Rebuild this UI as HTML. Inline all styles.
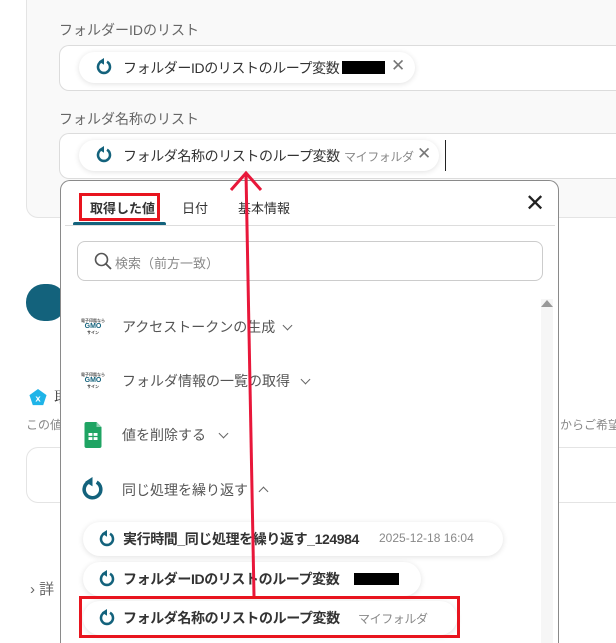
<!DOCTYPE html>
<html><head><meta charset="utf-8"><style>
*{box-sizing:border-box;margin:0;padding:0}
html,body{width:616px;height:643px;overflow:hidden}
body{background:#fff;font-family:"Liberation Sans","Noto Sans CJK JP",sans-serif;position:relative;color:#333}
.abs{position:absolute}
.card{left:26px;top:-20px;width:590px;height:238px;background:#f9f9f9;border:1px solid #e4e4e4;border-right:none;border-radius:12px 0 0 12px}
.lbl{font-size:14px;color:#666}
.inp{left:59px;width:557px;height:46px;background:#fff;border:1px solid #dcdcdc;border-right:none;border-radius:10px 0 0 10px}
.chip{height:31px;background:#fff;border-radius:16px;box-shadow:0 1px 6px rgba(0,0,0,.12);font-size:14px;color:#333;white-space:nowrap;letter-spacing:-0.4px}
.chip > *{position:absolute}
.sub{color:#888;font-size:12px}
.x{color:#777;font-size:17px}
.dd{left:60px;top:180px;width:499px;height:463px;background:#fff;border:1px solid #8a8a8a;border-bottom:none;border-radius:10px 10px 0 0;overflow:hidden}
.item{font-size:14px;color:#555}
.chev{display:inline-block;width:7px;height:7px;border-right:1.6px solid #666;border-bottom:1.6px solid #666;transform:rotate(45deg)}
.chipb{font-weight:bold;font-size:14px;color:#333}
</style></head><body>
<div class="abs card"></div>
<div class="abs lbl" style="left:59px;top:20px">フォルダーIDのリスト</div>
<div class="abs inp" style="top:45px"></div>
<div class="abs chip" style="left:79px;top:52px;width:336px">
<svg style="left:16px;top:6px" width="18" height="18" viewBox="0 0 24 24"><path d="M9 4.5A8 8 0 1 0 16 5" fill="none" stroke="#13627c" stroke-width="3.4"/><path d="M5 4.5 12 0v9z" fill="#13627c"/></svg><span style="left:44px;top:6px">フォルダーIDのリストのループ変数</span><span style="left:263px;top:9px;width:43px;height:13px;background:#000"></span><span class="x" style="left:312px;top:4px">✕</span></div>
<div class="abs lbl" style="left:59px;top:109px">フォルダ名称のリスト</div>
<div class="abs inp" style="top:133px"></div>
<div class="abs chip" style="left:79px;top:140px;width:360px">
<svg style="left:16px;top:6px" width="18" height="18" viewBox="0 0 24 24"><path d="M9 4.5A8 8 0 1 0 16 5" fill="none" stroke="#13627c" stroke-width="3.4"/><path d="M5 4.5 12 0v9z" fill="#13627c"/></svg><span style="left:44px;top:6px">フォルダ名称のリストのループ変数</span><span class="sub" style="left:265px;top:8px">マイフォルダ</span><span class="x" style="left:338px;top:4px">✕</span></div>
<div class="abs" style="left:445px;top:140px;width:1px;height:31px;background:#222"></div>

<div class="abs" style="left:26px;top:284px;width:40px;height:37px;background:#13627c;border-radius:18px"></div>
<svg class="abs" style="left:28px;top:388px" width="20" height="19" viewBox="0 0 20 20"><path d="M10 1 19 7.5 15.5 18h-11L1 7.5z" fill="#1fb4e8"/><text x="10" y="14" font-size="10" fill="#fff" text-anchor="middle" font-weight="bold" font-family="Liberation Sans">x</text></svg>
<div class="abs" style="left:54px;top:386px;font-size:15px;font-family:'Liberation Serif','Noto Serif CJK SC',serif">取</div>
<div class="abs" style="left:26px;top:416px;font-size:12px;color:#888">この値</div>
<div class="abs" style="left:560px;top:416px;font-size:12px;color:#888;white-space:nowrap">からご希望の</div>
<div class="abs" style="left:26px;top:447px;width:590px;height:56px;border:1px solid #e4e4e4;border-right:none;border-radius:12px 0 0 12px"></div>
<div class="abs" style="left:30px;top:578px;font-size:15px;color:#666">›&nbsp;詳</div>

<div class="abs dd">
<div class="abs" style="left:29px;top:17px;font-size:13px;font-weight:bold;color:#333">取得した値</div>
<div class="abs" style="left:18px;top:12px;width:81px;height:28px;border:3px solid #e8141e"></div>
<div class="abs" style="left:12px;top:41px;width:93px;height:4px;background:#13627c;border-radius:2px"></div>
<div class="abs" style="left:4px;top:44px;width:490px;height:1px;background:#ddd"></div>
<div class="abs" style="left:121px;top:17px;font-size:13px;color:#333">日付</div>
<div class="abs" style="left:177px;top:17px;font-size:13px;color:#333">基本情報</div>
<div class="abs" style="left:464px;top:8px;font-size:24px;color:#222">✕</div>
<div class="abs" style="left:16px;top:60px;width:466px;height:40px;border:1px solid #ccc;border-radius:8px"></div>
<svg class="abs" style="left:33px;top:71px" width="18" height="18" viewBox="0 0 18 18"><circle cx="7.5" cy="7.5" r="6" fill="none" stroke="#555" stroke-width="1.6"/><path d="M12 12 17 17" stroke="#555" stroke-width="1.8"/></svg>
<div class="abs" style="left:54px;top:72px;font-size:13px;color:#888">検索（前方一致）</div>
<div class="abs" style="left:480px;top:118px;width:12px;height:400px;background:#f6f6f6"></div>
<div class="abs" style="left:480px;top:119px;width:0;height:0;border-left:6px solid transparent;border-right:6px solid transparent;border-bottom:7px solid #999"></div>

<div class="abs" style="left:19px;top:137px;width:26px;font-size:7px;line-height:6px;color:#13627c;text-align:center;font-weight:bold"><div style="font-size:4px;color:#555">電子印鑑なら</div>GMO<div style="font-size:4px;color:#333">サイン</div></div>
<div class="abs item" style="left:61px;top:136px">アクセストークンの生成</div><span class="abs chev" style="left:223px;top:141px"></span>
<div class="abs" style="left:19px;top:191px;width:26px;font-size:7px;line-height:6px;color:#13627c;text-align:center;font-weight:bold"><div style="font-size:4px;color:#555">電子印鑑なら</div>GMO<div style="font-size:4px;color:#333">サイン</div></div>
<div class="abs item" style="left:61px;top:190px">フォルダ情報の一覧の取得</div><span class="abs chev" style="left:241px;top:195px"></span>
<svg class="abs" style="left:23px;top:241px" width="18" height="26" viewBox="0 0 17 26"><path d="M2 0h10l5 5v19a2 2 0 0 1-2 2H2a2 2 0 0 1-2-2V2a2 2 0 0 1 2-2z" fill="#1fa463"/><path d="M12 0v5h5z" fill="#8ed1b1"/><rect x="4" y="11" width="9" height="7" fill="#fff"/><path d="M4 14.5h9M8.5 11v7" stroke="#1fa463" stroke-width="1.2"/></svg>
<div class="abs item" style="left:61px;top:244px">値を削除する</div><span class="abs chev" style="left:159px;top:249px"></span>
<svg class="abs" style="left:19px;top:296px" width="25" height="25" viewBox="0 0 24 24"><path d="M9 4.5A8 8 0 1 0 16 5" fill="none" stroke="#13627c" stroke-width="3.4"/><path d="M5 4.5 12 0v9z" fill="#13627c"/></svg>
<div class="abs item" style="left:61px;top:299px">同じ処理を繰り返す</div><span class="abs chev" style="left:199px;top:307px;transform:rotate(225deg)"></span>

<div class="abs chip chipb" style="left:22px;top:341px;width:420px;height:34px;border-radius:17px">
<svg style="left:15px;top:8px" width="18" height="18" viewBox="0 0 24 24"><path d="M9 4.5A8 8 0 1 0 16 5" fill="none" stroke="#13627c" stroke-width="3.4"/><path d="M5 4.5 12 0v9z" fill="#13627c"/></svg><span style="left:40px;top:7px">実行時間_同じ処理を繰り返す_124984</span><span class="sub" style="font-weight:normal;left:296px;top:9px;letter-spacing:0">2025-12-18 16:04</span></div>
<div class="abs chip chipb" style="left:22px;top:381px;width:338px;height:34px;border-radius:17px">
<svg style="left:15px;top:8px" width="18" height="18" viewBox="0 0 24 24"><path d="M9 4.5A8 8 0 1 0 16 5" fill="none" stroke="#13627c" stroke-width="3.4"/><path d="M5 4.5 12 0v9z" fill="#13627c"/></svg><span style="left:40px;top:7px">フォルダーIDのリストのループ変数</span><span style="left:271px;top:11px;width:45px;height:12px;background:#000"></span></div>
<div class="abs chip chipb" style="left:22px;top:420px;width:374px;height:34px;border-radius:17px">
<svg style="left:15px;top:8px" width="18" height="18" viewBox="0 0 24 24"><path d="M9 4.5A8 8 0 1 0 16 5" fill="none" stroke="#13627c" stroke-width="3.4"/><path d="M5 4.5 12 0v9z" fill="#13627c"/></svg><span style="left:40px;top:7px">フォルダ名称のリストのループ変数</span><span class="sub" style="font-weight:normal;left:275px;top:9px">マイフォルダ</span></div>
<div class="abs" style="left:18px;top:415px;width:381px;height:42px;border:3px solid #e8141e"></div>
</div>

<svg class="abs" style="left:0;top:0" width="616" height="643"><path d="M254 596 246 173" stroke="#e8173a" stroke-width="3" fill="none"/><path d="M231 190 246 173 261 190" stroke="#e8173a" stroke-width="3" fill="none"/></svg>
</body></html>
